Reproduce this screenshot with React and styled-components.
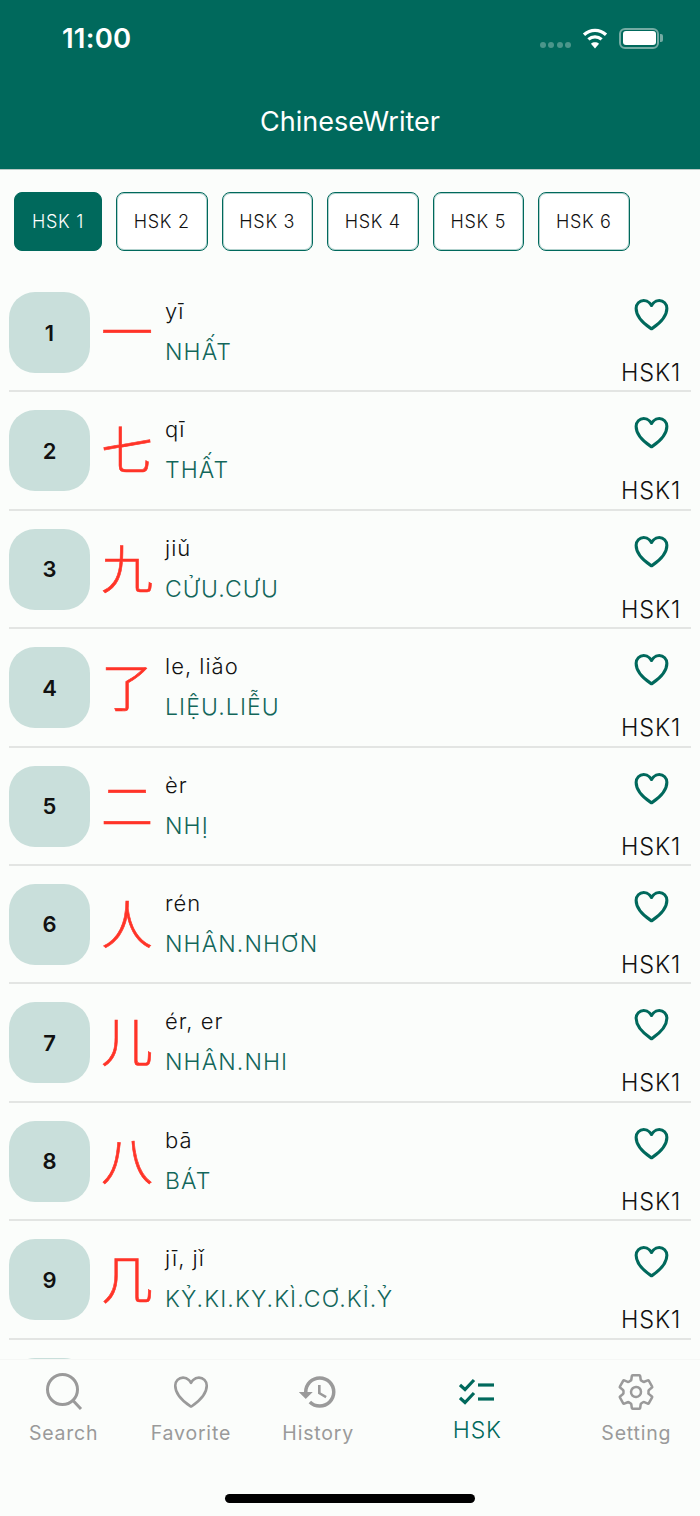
import React from 'react';
import styled, {createGlobalStyle} from 'styled-components';
import {IoHeartOutline, IoSettingsOutline} from 'react-icons/io5';
import {MdHistory} from 'react-icons/md';

const GREEN = '#00695c';
const GREY = '#9a9a9a';

const GlobalStyle = createGlobalStyle`
  html, body {
    margin: 0;
    padding: 0;
    background: #fbfdfb;
  }
  * {
    box-sizing: border-box;
  }
`;

const Page = styled.div`
  width: 700px;
  height: 1516px;
  display: flex;
  flex-direction: column;
  overflow: hidden;
  font-family: Inter, "Noto Sans", sans-serif;
  background: #fbfdfb;
`;

const Header = styled.header`
  flex: none;
  height: 170px;
  background: ${GREEN};
  border-bottom: 1px solid #b9c9c5;
  color: #fff;
  display: flex;
  flex-direction: column;
`;

const StatusBar = styled.div`
  height: 76px;
  padding: 0 41px 0 62px;
  display: flex;
  align-items: center;
  justify-content: space-between;
`;

const Clock = styled.span`
  font-size: 27.5px;
  font-weight: 600;
  letter-spacing: 0.2px;
`;

const StatusIcons = styled.div`
  display: flex;
  align-items: center;
`;

const SignalDots = styled.div`
  display: flex;
  gap: 2.5px;
  margin: 14px 11px 0 0;
`;

const SignalDot = styled.i`
  width: 6px;
  height: 6px;
  border-radius: 50%;
  background: #4b968b;
`;

const Battery = styled.div`
  width: 40px;
  height: 21px;
  margin-left: 11px;
  padding: 1.5px;
  border: 2px solid #74aba3;
  border-radius: 6px;
  position: relative;

  &::before {
    content: '';
    display: block;
    height: 100%;
    background: #fff;
    border-radius: 3px;
  }

  &::after {
    content: '';
    position: absolute;
    right: -6px;
    top: 4px;
    width: 3px;
    height: 8px;
    background: #74aba3;
    border-radius: 0 2px 2px 0;
  }
`;

const Title = styled.h1`
  margin: 16px 0 0;
  height: 60px;
  line-height: 60px;
  text-align: center;
  font-size: 27px;
  font-weight: 400;
`;

const LevelBar = styled.nav`
  flex: none;
  display: flex;
  gap: 14px;
  padding: 22px 0 23px 14px;
`;

const LevelButton = styled.div`
  width: ${props => (props.$active ? '88px' : '91.5px')};
  height: 59px;
  display: flex;
  align-items: center;
  justify-content: center;
  border: 1px solid ${GREEN};
  box-shadow: inset 0 0 0 1px rgba(0, 105, 92, 0.3);
  border-radius: 8px;
  background: ${props => (props.$active ? GREEN : '#fff')};
  color: ${props => (props.$active ? '#fff' : '#111')};
  font-size: 18px;
  font-weight: 300;
  letter-spacing: 0.7px;
`;

const List = styled.div`
  flex: 1;
  min-height: 0;
  overflow: hidden;
  padding: 0 9px;
`;

const Row = styled.div`
  height: 118.4px;
  flex: none;
  display: flex;
  align-items: flex-start;
  padding-top: 18px;
  border-bottom: 2px solid #e3e5e3;
`;

const NumberBadge = styled.div`
  flex: none;
  width: 81px;
  height: 81px;
  display: flex;
  align-items: center;
  justify-content: center;
  border-radius: 26px;
  background: #c9dfdb;
  color: #111;
  font-size: 22px;
  font-weight: 600;
`;

const Hanzi = styled.div`
  flex: none;
  width: 52px;
  height: 81px;
  margin: 0 12px 0 11px;
  line-height: 76px;
  text-align: center;
  color: #ff3428;
  font-family: "Noto Sans CJK SC", sans-serif;
  font-size: 52px;
  font-weight: 300;
  -webkit-text-stroke: 0.6px #ff3428;
`;

const Reading = styled.div`
  flex: 1;
  display: flex;
  flex-direction: column;
`;

const Pinyin = styled.div`
  height: 40px;
  line-height: 40px;
  margin-top: -1px;
  color: #111;
  font-size: 22px;
  font-weight: 300;
  letter-spacing: 1px;
`;

const Meaning = styled.div`
  height: 40px;
  line-height: 40px;
  margin-top: 1px;
  color: #12665a;
  font-size: 23px;
  font-weight: 300;
  letter-spacing: 1.1px;
`;

const Side = styled.div`
  flex: none;
  width: 60px;
  margin-right: 10px;
  padding-top: 2px;
  display: flex;
  flex-direction: column;
  align-items: center;
  color: ${GREEN};

  svg path {
    stroke-width: 38px;
  }
`;

const SideLevel = styled.div`
  margin-top: 24px;
  color: #111;
  font-size: 23.5px;
  font-weight: 300;
  line-height: 28px;
  letter-spacing: 0.8px;
  white-space: nowrap;
`;

const TabBar = styled.footer`
  flex: none;
  height: 157px;
  background: #fbfdfb;
  display: flex;
  flex-direction: column;
  border-top: 1px solid #f5f7f5;
`;

const Tabs = styled.div`
  display: flex;
  height: 134px;
`;

const Tab = styled.div`
  flex: ${props => (props.$active ? 1.5 : 1)};
  display: flex;
  flex-direction: column;
  align-items: center;
  padding-top: 12px;
  color: ${props => (props.$active ? GREEN : GREY)};
`;

const TabIcon = styled.div`
  height: 40px;
  display: flex;
  align-items: center;
  justify-content: center;
`;

const TabLabel = styled.span`
  margin-top: ${props => (props.$active ? '4px' : '7px')};
  font-size: ${props => (props.$active ? '23px' : '19.5px')};
  font-weight: ${props => (props.$active ? 300 : 400)};
  letter-spacing: 0.8px;
  line-height: 28px;
`;

const HomeIndicator = styled.div`
  width: 250px;
  height: 9px;
  margin: 0 auto;
  border-radius: 5px;
  background: #000;
`;

const WifiIcon = () => (
  <svg width="26" height="22" viewBox="0 0 28 24" fill="none" stroke="#fff" strokeWidth="3.6">
    <path d="M2 8.5C9 2 19 2 26 8.5" />
    <path d="M6.8 13.5C11 9.8 17 9.8 21.2 13.5" />
    <path d="M14 23.5L9.6 18.2C12 16.2 16 16.2 18.4 18.2Z" fill="#fff" stroke="none" />
  </svg>
);

const SearchIcon = () => (
  <svg width="38" height="38" viewBox="0 0 38 38" fill="none" stroke="currentColor" strokeWidth="3">
    <circle cx="17.5" cy="16.5" r="15" />
    <path d="M28 27.5L36 36" />
  </svg>
);

const ChecklistIcon = () => (
  <svg width="36" height="28" viewBox="0 0 36 28" fill="none" stroke="currentColor" strokeWidth="3.2">
    <path d="M1 7L6 11.5L15 2" />
    <path d="M1 20L6 24.5L15 15" />
    <path d="M19 7H35" />
    <path d="M19 21H35" />
  </svg>
);

const levels = ['HSK 1', 'HSK 2', 'HSK 3', 'HSK 4', 'HSK 5', 'HSK 6'];

const words = [
  {hanzi: '一', pinyin: 'yī', meaning: 'NHẤT'},
  {hanzi: '七', pinyin: 'qī', meaning: 'THẤT'},
  {hanzi: '九', pinyin: 'jiǔ', meaning: 'CỬU.CƯU'},
  {hanzi: '了', pinyin: 'le, liǎo', meaning: 'LIỆU.LIỄU'},
  {hanzi: '二', pinyin: 'èr', meaning: 'NHỊ'},
  {hanzi: '人', pinyin: 'rén', meaning: 'NHÂN.NHƠN'},
  {hanzi: '儿', pinyin: 'ér, er', meaning: 'NHÂN.NHI'},
  {hanzi: '八', pinyin: 'bā', meaning: 'BÁT'},
  {hanzi: '几', pinyin: 'jī, jǐ', meaning: 'KỶ.KI.KY.KÌ.CƠ.KỈ.Ỷ'},
];

const tabs = [
  {label: 'Search', icon: <SearchIcon />},
  {label: 'Favorite', icon: <IoHeartOutline size={42} />},
  {label: 'History', icon: <MdHistory size={42} />},
  {label: 'HSK', icon: <ChecklistIcon />, active: true},
  {label: 'Setting', icon: <IoSettingsOutline size={40} />},
];

const App = () => (
  <Page>
    <GlobalStyle />
    <Header>
      <StatusBar>
        <Clock>11:00</Clock>
        <StatusIcons>
          <SignalDots>
            <SignalDot />
            <SignalDot />
            <SignalDot />
            <SignalDot />
          </SignalDots>
          <WifiIcon />
          <Battery />
        </StatusIcons>
      </StatusBar>
      <Title>ChineseWriter</Title>
    </Header>
    <LevelBar>
      {levels.map((level, i) => (
        <LevelButton key={level} $active={i === 0}>{level}</LevelButton>
      ))}
    </LevelBar>
    <List>
      {words.map((word, i) => (
        <Row key={i}>
          <NumberBadge>{i + 1}</NumberBadge>
          <Hanzi lang="zh-CN">{word.hanzi}</Hanzi>
          <Reading>
            <Pinyin>{word.pinyin}</Pinyin>
            <Meaning>{word.meaning}</Meaning>
          </Reading>
          <Side>
            <IoHeartOutline size={41} />
            <SideLevel>HSK1</SideLevel>
          </Side>
        </Row>
      ))}
      <Row>
        <NumberBadge />
      </Row>
    </List>
    <TabBar>
      <Tabs>
        {tabs.map(tab => (
          <Tab key={tab.label} $active={tab.active}>
            <TabIcon>{tab.icon}</TabIcon>
            <TabLabel $active={tab.active}>{tab.label}</TabLabel>
          </Tab>
        ))}
      </Tabs>
      <HomeIndicator />
    </TabBar>
  </Page>
);

export default App;
